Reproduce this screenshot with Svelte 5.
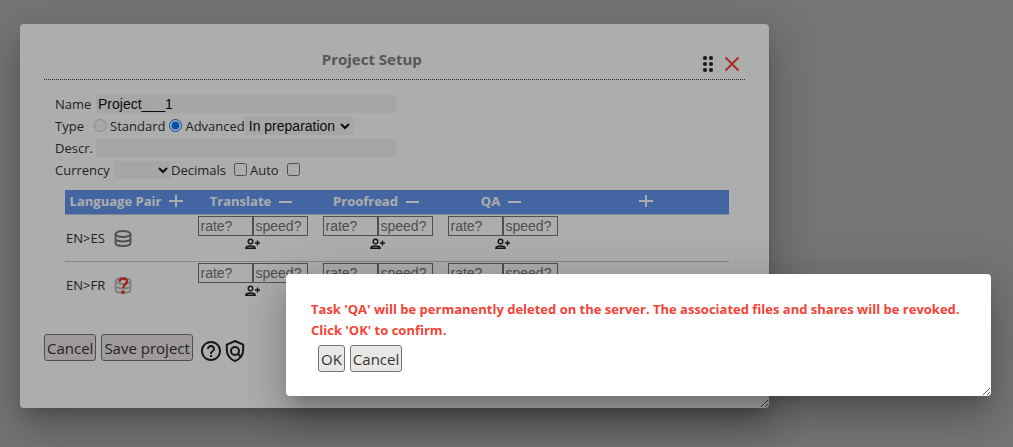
<script lang="ts">
  const tasks = ["Translate", "Proofread", "QA"];
  const pairs = [
    { name: "EN>ES", missing: false },
    { name: "EN>FR", missing: true },
  ];

  let name = "Project___1";
  let kind = "advanced";
  let status = "In preparation";
  let descr = "";
  let currency = "";
</script>

<main>
  <div class="backdrop"></div>
  <section class="window setup" aria-label="Project Setup">
    <header>
      <h1>Project Setup</h1>
      <button class="icon" aria-label="Move">
        <svg width="24" height="24" viewBox="0 0 24 24" fill="#222">
          <circle cx="9" cy="6" r="2.1" /><circle cx="15" cy="6" r="2.1" />
          <circle cx="9" cy="12" r="2.1" /><circle cx="15" cy="12" r="2.1" />
          <circle cx="9" cy="18" r="2.1" /><circle cx="15" cy="18" r="2.1" />
        </svg>
      </button>
      <button class="icon" aria-label="Close">
        <svg width="24" height="24" viewBox="0 0 24 24" stroke="#f44336" stroke-width="2">
          <path d="M5.5 5.5l13 13M18.5 5.5l-13 13" />
        </svg>
      </button>
    </header>

    <form>
      <div class="row">
        <label class="first" for="name">Name</label>
        <input id="name" class="text" bind:value={name} />
      </div>
      <div class="row">
        <span class="type">Type</span>
        <input id="standard" type="radio" value="standard" disabled bind:group={kind} />
        <label for="standard">Standard</label>
        <input id="advanced" type="radio" value="advanced" bind:group={kind} />
        <label for="advanced">Advanced</label>
        <select class="status" aria-label="Status" bind:value={status}>
          <option>In preparation</option>
        </select>
      </div>
      <div class="row">
        <label class="first" for="descr">Descr.</label>
        <input id="descr" class="text" bind:value={descr} />
      </div>
      <div class="row">
        <label class="currency-label" for="currency">Currency</label>
        <select id="currency" class="currency" bind:value={currency}>
          <option value=""></option>
        </select>
        <label for="decimals">Decimals</label>
        <input id="decimals" type="checkbox" />
        <label for="auto">Auto</label>
        <input id="auto" type="checkbox" />
      </div>
    </form>

    <table>
      <thead>
        <tr>
          <th>
            <div class="head">
              Language Pair
              <button class="icon" aria-label="Add language pair">
                <svg width="14" height="14" viewBox="0 0 14 14" stroke="#fff" stroke-width="2">
                  <path d="M0 7h14M7 1v12" />
                </svg>
              </button>
            </div>
          </th>
          {#each tasks as task}
            <th>
              <div class="head">
                {task}
                <button class="icon" aria-label="Remove {task}">
                  <svg width="14" height="14" viewBox="0 0 14 14" stroke="#fff" stroke-width="2">
                    <path d="M0 8h13" />
                  </svg>
                </button>
              </div>
            </th>
          {/each}
          <th class="rest">
            <div class="head">
              <button class="icon" aria-label="Add task">
                <svg width="14" height="14" viewBox="0 0 14 14" stroke="#fff" stroke-width="2">
                  <path d="M0 7h14M7 1v12" />
                </svg>
              </button>
            </div>
          </th>
        </tr>
      </thead>
      <tbody>
        {#each pairs as pair}
          <tr>
            <td>
              <div class="pair">
                {pair.name}
                <svg width="18" height="18" viewBox="0 0 18 18" fill="none">
                  <g stroke={pair.missing ? "#bbb" : "#777"} stroke-width="1.8">
                    <ellipse cx="9" cy="5" rx="7.5" ry="3" />
                    <path d="M1.5 5v9c0 1.7 3.3 3 7.5 3s7.5-1.3 7.5-3V5M1.5 9.500c0 1.700 3.300 3 7.500 3s7.500-1.300 7.500-3" />
                  </g>
                  {#if pair.missing}
                    <path stroke="#f22c20" stroke-width="2.2" d="M5.5 6c0-4.5 7.5-4.500 7.500-.5 0 3-3.800 2.500-3.800 6.500" />
                    <circle cx="9" cy="16" r="1.800" fill="#f22c20" />
                  {/if}
                </svg>
              </div>
            </td>
            {#each tasks as task}
              <td>
                <div class="cell">
                  <div class="numbers">
                    <input placeholder="rate?" aria-label="{task} rate {pair.name}" />
                    <input placeholder="speed?" aria-label="{task} speed {pair.name}" />
                  </div>
                  <button class="icon" aria-label="Assign {task} {pair.name}">
                    <svg width="16" height="12" viewBox="0 0 16 12" fill="none" stroke="#222" stroke-width="1.4">
                      <circle cx="5.5" cy="3.5" r="2.3" />
                      <path d="M.8 10.300c0-3 9.400-3 9.400 0zM10 5h5M12.500 2.500v5" />
                    </svg>
                  </button>
                </div>
              </td>
            {/each}
            <td></td>
          </tr>
        {/each}
      </tbody>
    </table>

    <footer>
      <button class="btn">Cancel</button>
      <button class="btn">Save project</button>
      <div class="links">
        <button class="icon" aria-label="Help">
          <svg width="24" height="24" viewBox="0 0 24 24" fill="#222">
            <path d="M11 18h2v-2h-2v2zm1-16C6.480 2 2 6.480 2 12s4.480 10 10 10 10-4.480 10-10S17.520 2 12 2zm0 18c-4.410 0-8-3.590-8-8s3.590-8 8-8 8 3.590 8 8-3.590 8-8 8zm0-14c-2.210 0-4 1.790-4 4h2c0-1.100.9-2 2-2s2 .9 2 2c0 2-3 1.750-3 5h2c0-2.250 3-2.500 3-5 0-2.210-1.790-4-4-4z" />
          </svg>
        </button>
        <button class="icon" aria-label="Privacy">
          <svg width="24" height="24" viewBox="0 0 24 24" fill="none" stroke="#222" stroke-width="2">
            <path d="M12 2l8.200 3.600V11c0 4.900-3.300 9.500-8.200 11-4.900-1.500-8.200-6.100-8.200-11V5.600z" />
            <circle cx="12" cy="12" r="4" />
            <path d="M14.800 14.800l3.600 3.600" />
          </svg>
        </button>
      </div>
    </footer>
  </section>

  <div class="backdrop"></div>
  <div class="window confirm" role="alertdialog" aria-labelledby="message">
    <p id="message">
      Task 'QA' will be permanently deleted on the server. The associated files and shares will be
      revoked. Click 'OK' to confirm.
    </p>
    <div class="actions">
      <button class="btn">OK</button>
      <button class="btn">Cancel</button>
    </div>
  </div>
</main>

<style>
  :global(body) {
    background: #fff;
  }

  main {
    height: 100vh;
    position: relative;
    overflow: hidden;

    color: #333;
    font-family: "Open Sans", "Noto Sans", sans-serif;
    font-size: 13px;
  }

  .backdrop {
    position: absolute;
    inset: 0;
    background: rgba(0, 0, 0, 0.32);
  }

  .window {
    position: absolute;
    box-sizing: border-box;
    padding: 24px;

    background: #fff;
    border-radius: 4px;
    box-shadow:
      0 11px 15px -7px rgba(0, 0, 0, 0.2),
      0 24px 38px 3px rgba(0, 0, 0, 0.14),
      0 9px 46px 8px rgba(0, 0, 0, 0.12);

    resize: both;
    overflow: auto;
  }

  .setup {
    left: 20px;
    top: 24px;
    width: calc(74% - 1px);
    padding-bottom: 45px;
  }

  .confirm {
    left: 286px;
    right: 22px;
    top: 274px;
  }

  button,
  input,
  select {
    margin: 0;
    color: #111;
    font-family: "Liberation Sans", Arial, sans-serif;
    font-size: 14px;
  }

  .icon {
    display: flex;
    padding: 0;
    border: 0;
    background: none;
  }

  header {
    display: flex;
    align-items: flex-end;
    height: 31px;
    padding-right: 1px;
    border-bottom: 1px dotted #444;
  }

  header .icon {
    padding-bottom: 3px;
  }

  h1 {
    flex: 1;
    margin: 0;
    padding: 0 0 8px 4px;

    color: #808080;
    font-size: 15px;
    line-height: 24px;
    text-align: center;
  }

  form {
    display: flex;
    flex-direction: column;
    gap: 4px;
    padding: 15px 11px 11px;
  }

  .row {
    display: flex;
    align-items: center;
    height: 18px;
    white-space: nowrap;
  }

  .first {
    width: 41px;
  }

  .type {
    width: 35px;
  }

  .text {
    box-sizing: border-box;
    width: 300px;
    height: 18px;
    padding: 0 2px;
    border: 0;
    background: #f5f5f5;
  }

  select {
    height: 18px;
    padding: 0;
    border: 0;
    background: #f5f5f5;
  }

  .status {
    width: 108px;
  }

  .currency-label {
    width: 59px;
  }

  .currency {
    width: 57px;
  }

  input[type="radio"],
  input[type="checkbox"] {
    width: 13px;
    height: 13px;
    margin: 0 3px 2px 4px;
  }

  input[type="checkbox"] {
    margin-left: 8px;
  }

  table {
    width: calc(100% - 37px);
    margin-left: 21px;
    border-collapse: collapse;
    table-layout: fixed;
  }

  tr {
    border-bottom: 1px solid #b8cbd9;
  }

  tbody tr:last-child {
    border-bottom: 0;
  }

  th,
  td {
    width: 125px;
    padding: 0;
  }

  th {
    height: 24px;
    background: cornflowerblue;
    color: #fff;
  }

  .rest {
    width: auto;
  }

  .head {
    display: flex;
    justify-content: center;
    align-items: center;
    gap: 8px;
    padding: 0 2px 2px 0;
  }

  .pair {
    display: flex;
    align-items: center;
    gap: 9px;
    padding-left: 1px;
  }

  .cell {
    display: flex;
    flex-direction: column;
    align-items: center;
    gap: 2px;
    height: 45px;
    padding-top: 1px;
  }

  .numbers {
    display: flex;
  }

  .numbers input {
    box-sizing: border-box;
    width: 55px;
    height: 20px;
    padding: 0 2px;
    border: 1px solid #767676;
    background: none;
  }

  .numbers input::placeholder {
    color: #757575;
  }

  footer {
    display: flex;
    gap: 5px;
    padding-top: 26px;
  }

  .links {
    display: flex;
    align-items: flex-end;
    padding: 5px 0 0 1px;
  }

  .btn {
    height: 27px;
    padding: 0 2px;
    border: 1px solid #767676;
    border-radius: 3px;

    background: #e9e7e6;
    color: #333;
    font-family: "Open Sans", "Noto Sans", sans-serif;
    font-size: 15px;
  }

  .setup .btn {
    background: #ebe4e6;
  }

  #message {
    margin: 0;
    padding: 1px 1px 0;

    color: #f44336;
    font-weight: bold;
    line-height: 21px;
  }

  .actions {
    display: flex;
    gap: 5px;
    padding: 4px 8px 0;
  }
</style>
